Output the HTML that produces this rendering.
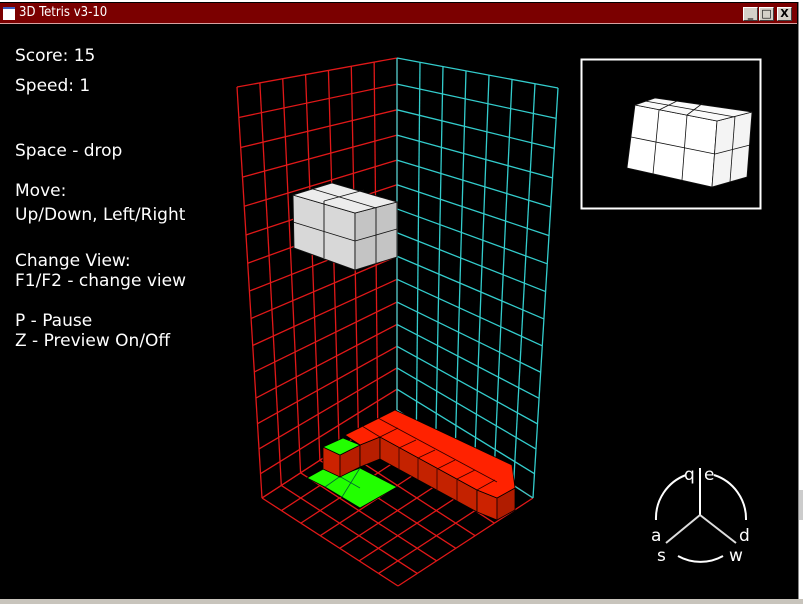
<!DOCTYPE html>
<html><head><meta charset="utf-8"><style>
html,body{margin:0;padding:0;background:#fff;width:803px;height:604px;overflow:hidden;position:relative;font-family:"DejaVu Sans","Liberation Sans",sans-serif}
#win{position:absolute;left:0;top:2px;width:798px;height:597px;background:#000;border-right:1px solid #888}
#title{position:absolute;left:0;top:3px;width:797px;height:20px;background:#7b0000;border-bottom:1px solid #d8a0a0}
#title .ic{position:absolute;left:3px;top:4px;width:12px;height:11px;background:#fff;border-top:2px solid #4060c0}
#title .t{position:absolute;left:19px;top:2px;color:#fff;font-size:13px;font-family:"DejaVu Sans Condensed","DejaVu Sans",sans-serif}
.b{position:absolute;top:4px;width:15px;height:14px;background:#d4d0c8;border:1px solid #fff;border-right-color:#404040;border-bottom-color:#404040;box-sizing:border-box;font-size:11px;line-height:12px;text-align:center;color:#000;font-weight:bold}
.tx{position:absolute;left:15px;color:#fff;font-size:17px;white-space:nowrap}
svg{position:absolute;left:0;top:0}
</style></head><body>
<div id="win"></div>
<div id="title"><div class="ic"></div><div class="t">3D Tetris v3-10</div>
<div class="b" style="left:743px">_</div><div class="b" style="left:759px">□</div><div class="b" style="left:777px">X</div></div>
<div style="position:absolute;left:0;top:599px;width:803px;height:5px;background:#c8c4bc"></div>
<div style="position:absolute;left:799px;top:490px;width:4px;height:30px;background:#ccc"></div>
<div class="tx" style="top:46px">Score: 15</div>
<div class="tx" style="top:76px">Speed: 1</div>
<div class="tx" style="top:141px">Space - drop</div>
<div class="tx" style="top:181px">Move:</div>
<div class="tx" style="top:205px">Up/Down, Left/Right</div>
<div class="tx" style="top:251px">Change View:</div>
<div class="tx" style="top:271px">F1/F2 - change view</div>
<div class="tx" style="top:311px">P - Pause</div>
<div class="tx" style="top:331px">Z - Preview On/Off</div>
<svg id="s" width="803" height="604" xmlns="http://www.w3.org/2000/svg">
<g id="grid" fill="none" stroke-width="1.3"></g>
<g stroke="#000" stroke-width="0.8">
<polygon points="307,478 325,468 342,475 360,468 397,487 360,508 325,487" fill="#22ff00"/>
<line x1="325" y1="468" x2="360" y2="488" stroke="#063"/><line x1="342" y1="475" x2="325" y2="487" stroke="#063"/><line x1="360" y1="468" x2="342" y2="497" stroke="#063"/>
<polygon points="323,447 340,455 340,477 323,469" fill="#cc2200"/>
<polygon points="340,455 360,445 360,467 340,477" fill="#b81e00"/>
<polygon points="360,445 380,437 380,459 360,467" fill="#b81e00"/>
<polygon points="380,437 477,490 477,512 380,459" fill="#c42200"/>
<polygon points="477,490 497,498 497,520 477,512" fill="#cc2200"/>
<polygon points="497,498 515,488 515,510 497,520" fill="#b01c00"/>
<polygon points="345,435 395,410 512,465 515,488 497,498 477,490 380,437 360,445" fill="#ff2200"/>
<polygon points="323,447 343,438 360,445 340,455" fill="#22ff00"/>
<g stroke="#300"><line x1="362" y1="426" x2="380" y2="437"/><line x1="378" y1="418" x2="497" y2="482"/><line x1="380" y1="437" x2="398" y2="428"/><line x1="399" y1="448" x2="416" y2="440"/><line x1="418" y1="458" x2="435" y2="450"/><line x1="437" y1="469" x2="455" y2="460"/><line x1="457" y1="479" x2="475" y2="470"/><line x1="477" y1="490" x2="495" y2="480"/><line x1="497" y1="498" x2="497" y2="520"/><line x1="457" y1="479" x2="457" y2="501"/><line x1="437" y1="469" x2="437" y2="491"/><line x1="418" y1="458" x2="418" y2="480"/><line x1="399" y1="448" x2="399" y2="470"/><line x1="340" y1="455" x2="340" y2="477"/></g>
</g>
<g stroke="#111" stroke-width="0.9">
<polygon points="293,195 355,213 355,270 294,248" fill="#d8d8d8"/>
<polygon points="355,213 397,202 397,257 355,270" fill="#c4c4c4"/>
<polygon points="293,195 332,183 397,202 355,213" fill="#ececec"/>
<line x1="313" y1="189" x2="376" y2="208"/><line x1="324" y1="201" x2="364" y2="190"/>
<line x1="324" y1="201" x2="324" y2="258"/><line x1="376" y1="208" x2="376" y2="263"/>
<line x1="293" y1="222" x2="355" y2="241"/><line x1="355" y1="241" x2="397" y2="229"/>
</g>
<rect x="581.5" y="59.5" width="179" height="149" fill="none" stroke="#fff" stroke-width="2"/>
<g stroke="#111" stroke-width="0.8">
<polygon points="635,105 717,121 712,187 627,168" fill="#fff"/>
<polygon points="717,121 752,112 747,177 712,187" fill="#f4f4f4"/>
<polygon points="635,105 655,98 752,112 717,121" fill="#fafafa"/>
<line x1="659" y1="110" x2="653" y2="174"/><line x1="687" y1="115" x2="682" y2="180"/>
<line x1="631" y1="137" x2="715" y2="154"/><line x1="715" y1="154" x2="750" y2="145"/>
<line x1="735" y1="116" x2="730" y2="182"/>
<line x1="645" y1="101" x2="735" y2="117"/><line x1="687" y1="115" x2="703" y2="103"/><line x1="659" y1="110" x2="677" y2="101"/>
</g>
<g stroke="#fff" stroke-width="2" fill="none">
<line x1="700" y1="468" x2="700" y2="515"/>
<line x1="700" y1="515" x2="666" y2="543" stroke="#ddd"/>
<line x1="700" y1="515" x2="736" y2="543" stroke="#ddd"/>
<path d="M656,520 A46,46 0 0 1 686,475"/>
<path d="M714,475 A46,46 0 0 1 746,520"/>
<path d="M678,556 A46,46 0 0 0 723,556"/>
</g>
<g fill="#fff" font-size="17" font-family="DejaVu Sans,sans-serif">
<text x="684" y="480">q</text><text x="704" y="480">e</text>
<text x="651" y="541">a</text><text x="739" y="541">d</text>
<text x="657" y="561">s</text><text x="729" y="561">w</text>
</g>
</svg>
<script>
var g=document.getElementById('grid');
function L(a,b,c){var l=document.createElementNS('http://www.w3.org/2000/svg','line');l.setAttribute('x1',a[0]);l.setAttribute('y1',a[1]);l.setAttribute('x2',b[0]);l.setAttribute('y2',b[1]);l.setAttribute('stroke',c);g.appendChild(l);}
function lerp(a,b,t){return [a[0]+(b[0]-a[0])*t,a[1]+(b[1]-a[1])*t];}
function quad(tl,tr,br,bl,nx,ny,c){
 for(var i=0;i<=nx;i++){var t=i/nx;L(lerp(tl,tr,t),lerp(bl,br,t),c);}
 for(var j=0;j<=ny;j++){var t=j/ny;t=t*(1+0.12*(1-t));L(lerp(tl,bl,t),lerp(tr,br,t),c);}
}
var back=[397,410];
var fl=[262,498],fr=[533,498],ff=[398,586];
for(var i=0;i<=7;i++){var t=i/7;L(lerp(back,fl,t),lerp(fr,ff,t),'#e01818');L(lerp(back,fr,t),lerp(fl,ff,t),'#e01818');}
quad([237,87],[397,58],back,[262,498],7,15,'#e01818');
quad([397,58],[558,88],[533,498],back,7,15,'#33cccc');
</script>
</body></html>
